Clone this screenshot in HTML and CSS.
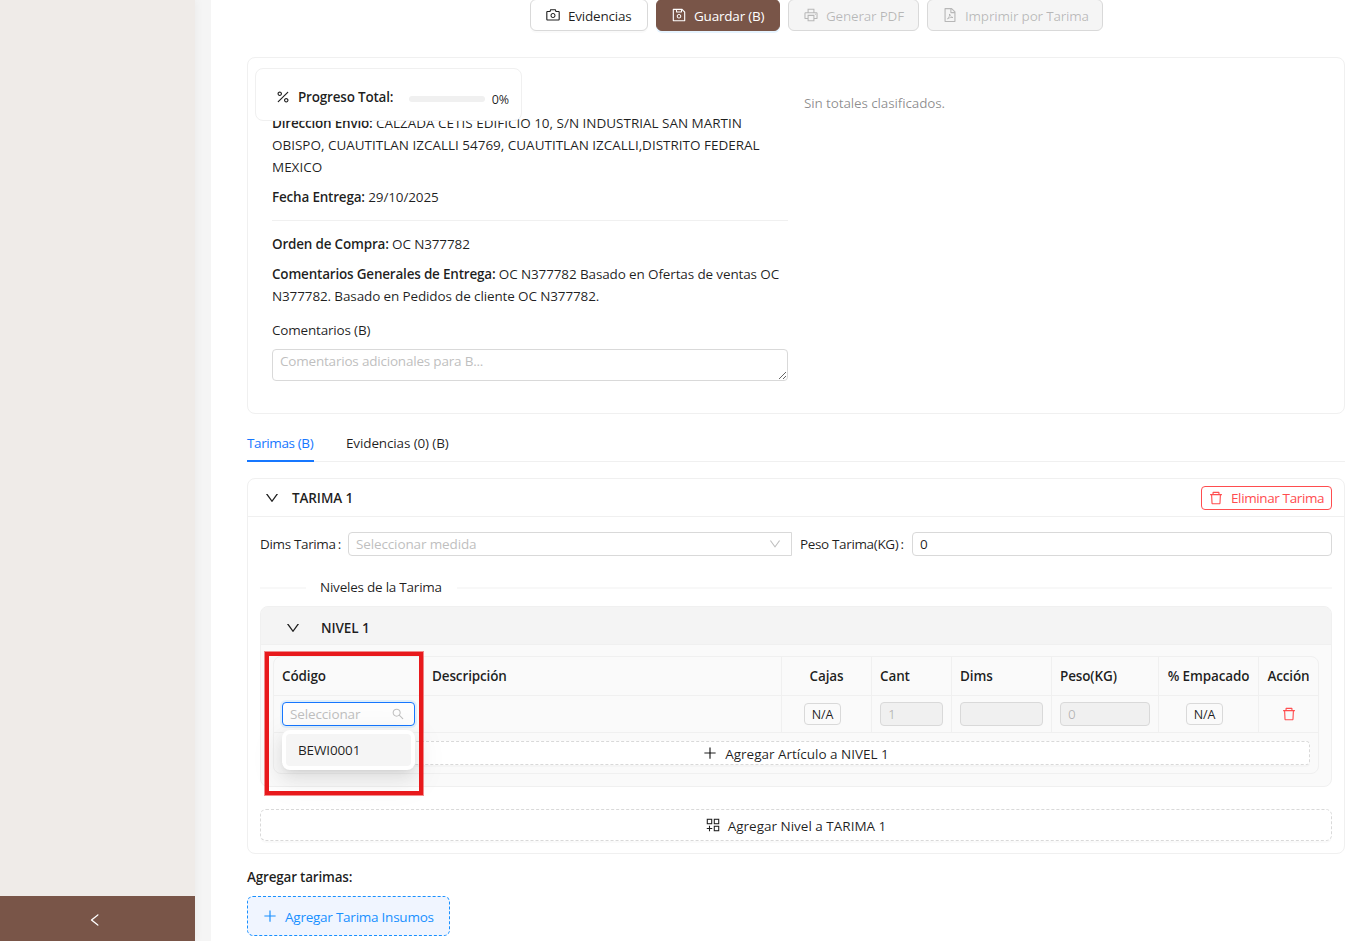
FILE: index.html
```html
<!DOCTYPE html>
<html lang="es">
<head>
    <meta charset="UTF-8">
    <meta name="viewport" content="width=device-width, initial-scale=1.0">
    <title>Tarimas</title>
    <link rel="stylesheet" href="styles.css">
</head>
<body>
    <svg class="sprite" xmlns="http://www.w3.org/2000/svg">
        <symbol id="plus" viewBox="64 64 896 896"><path d="M482 152h60q8 0 8 8v704q0 8-8 8h-60q-8 0-8-8V160q0-8 8-8z"/><path d="M160 474h704q8 0 8 8v60q0 8-8 8H160q-8 0-8-8v-60q0-8 8-8z"/></symbol>
        <symbol id="down" viewBox="64 64 896 896"><path d="M884 256h-75c-5.1 0-9.9 2.5-12.9 6.6L512 654.2 227.9 262.6c-3-4.1-7.8-6.6-12.9-6.6h-75c-6.5 0-10.3 7.4-6.5 12.7l352.6 486.1c12.8 17.6 39 17.6 51.7 0l352.6-486.1c3.9-5.3.1-12.7-6.4-12.7z"/></symbol>
        <symbol id="left" viewBox="64 64 896 896"><path d="M724 218.3V141c0-6.7-7.7-10.4-12.9-6.3L260.3 486.8a31.86 31.86 0 000 50.3l450.8 352.1c5.3 4.1 12.9.4 12.9-6.3v-77.3c0-4.9-2.3-9.6-6.1-12.6l-360-281 360-281.1c3.8-3 6.1-7.7 6.1-12.6z"/></symbol>
        <symbol id="delete" viewBox="64 64 896 896"><path d="M360 184h-8c4.4 0 8-3.6 8-8v8h304v-8c0 4.4 3.6 8 8 8h-8v72h72v-80c0-35.3-28.7-64-64-64H352c-35.3 0-64 28.7-64 64v80h72v-72zm504 72H160c-17.7 0-32 14.3-32 32v32c0 4.4 3.6 8 8 8h60.4l24.7 523c1.6 34.1 29.8 61 63.9 61h454c34.2 0 62.3-26.8 63.9-61l24.7-523H888c4.4 0 8-3.6 8-8v-32c0-17.7-14.3-32-32-32zM731.3 840H292.7l-24.2-512h487l-24.2 512z"/></symbol>
        <symbol id="search" viewBox="64 64 896 896"><path d="M909.6 854.5L649.9 594.8C690.2 542.7 712 479 712 412c0-80.2-31.3-155.4-87.9-212.1-56.6-56.7-132-87.9-212.1-87.9s-155.5 31.3-212.1 87.9C143.2 256.5 112 331.8 112 412c0 80.1 31.3 155.5 87.9 212.1C256.5 680.8 331.8 712 412 712c67 0 130.6-21.8 182.7-62l259.7 259.6a8.2 8.2 0 0011.6 0l43.6-43.5a8.2 8.2 0 000-11.6zM570.4 570.4C528 612.7 471.8 636 412 636s-116-23.3-158.4-65.6C211.3 528 188 471.8 188 412s23.3-116.1 65.6-158.4C296 211.3 352.2 188 412 188s116.1 23.2 158.4 65.6S636 352.2 636 412s-23.3 116.1-65.6 158.4z"/></symbol>
        <symbol id="camera" viewBox="64 64 896 896"><path d="M864 248H728l-32.4-90.8a32.07 32.07 0 00-30.2-21.2H358.6c-13.5 0-25.6 8.5-30.1 21.2L296 248H160c-44.2 0-80 35.8-80 80v456c0 44.2 35.8 80 80 80h704c44.2 0 80-35.8 80-80V328c0-44.2-35.8-80-80-80zm8 536c0 4.4-3.6 8-8 8H160c-4.4 0-8-3.6-8-8V328c0-4.4 3.6-8 8-8h186.7l17.1-47.8 22.9-64.2h250.5l22.9 64.2 17.1 47.8H864c4.4 0 8 3.6 8 8v456zM512 384c-88.4 0-160 71.6-160 160s71.6 160 160 160 160-71.6 160-160-71.6-160-160-160zm0 256c-53 0-96-43-96-96s43-96 96-96 96 43 96 96-43 96-96 96z"/></symbol>
        <symbol id="save" viewBox="64 64 896 896"><path d="M893.3 293.3L730.7 130.7c-7.5-7.5-16.7-13-26.7-16V112H144c-17.7 0-32 14.3-32 32v736c0 17.7 14.3 32 32 32h736c17.7 0 32-14.3 32-32V338.5c0-17-6.7-33.2-18.7-45.2zM384 184h256v104H384V184zm456 656H184V184h136v136c0 17.7 14.3 32 32 32h320c17.7 0 32-14.3 32-32V205.8l136 136V840zM512 442c-79.5 0-144 64.5-144 144s64.5 144 144 144 144-64.5 144-144-64.5-144-144-144zm0 224c-44.2 0-80-35.8-80-80s35.8-80 80-80 80 35.8 80 80-35.8 80-80 80z"/></symbol>
        <symbol id="printer" viewBox="64 64 896 896"><path d="M820 436h-40c-4.4 0-8 3.6-8 8v40c0 4.4 3.6 8 8 8h40c4.4 0 8-3.6 8-8v-40c0-4.4-3.6-8-8-8zm32-104H732V120c0-4.4-3.6-8-8-8H300c-4.4 0-8 3.6-8 8v212H172c-44.2 0-80 35.8-80 80v328c0 17.7 14.3 32 32 32h168v132c0 4.4 3.6 8 8 8h424c4.4 0 8-3.6 8-8V772h168c17.7 0 32-14.3 32-32V412c0-44.2-35.8-80-80-80zM360 180h304v152H360V180zm304 664H360V568h304v276zm200-140H732V500H292v204H160V412c0-6.6 5.4-12 12-12h680c6.6 0 12 5.4 12 12v292z"/></symbol>
        <symbol id="pdf" viewBox="64 64 896 896"><path d="M854.6 288.6L639.4 73.4c-6-6-14.1-9.4-22.6-9.4H192c-17.7 0-32 14.3-32 32v832c0 17.7 14.3 32 32 32h640c17.7 0 32-14.3 32-32V311.3c0-8.5-3.4-16.7-9.4-22.7zM790.2 326H602V137.8L790.2 326zm1.8 562H232V136h302v216a42 42 0 0042 42h216v494z"/><path d="M490 445c22 105 70 195 205 225-130-15-250 20-350 100 85-75 150-190 145-325z" fill="none" stroke="currentColor" stroke-width="48" stroke-linejoin="round"/></symbol>
        <symbol id="percentage" viewBox="64 64 896 896"><path d="M855.7 210.8l-42.4-42.4a8.03 8.03 0 00-11.3 0L168.3 801.9a8.03 8.03 0 000 11.3l42.4 42.4c3.1 3.1 8.2 3.1 11.3 0L855.6 222c3.2-3 3.2-8.1.1-11.2zM304 448c79.4 0 144-64.6 144-144s-64.6-144-144-144-144 64.6-144 144 64.6 144 144 144zm0-216c39.7 0 72 32.3 72 72s-32.3 72-72 72-72-32.3-72-72 32.3-72 72-72zm416 344c-79.4 0-144 64.6-144 144s64.6 144 144 144 144-64.6 144-144-64.6-144-144-144zm0 216c-39.7 0-72-32.3-72-72s32.3-72 72-72 72 32.3 72 72-32.3 72-72 72z"/></symbol>
        <symbol id="appstore-add" viewBox="64 64 896 896"><g fill="none" stroke="currentColor" stroke-width="68"><rect x="146" y="146" width="284" height="284"/><rect x="594" y="146" width="284" height="284"/><rect x="594" y="594" width="284" height="284"/><path d="M288 556v356M112 734h352"/></g></symbol>
    </svg>

    <div class="sidebar">
        <div class="sidebar-trigger"><svg class="icon"><use href="#left"/></svg></div>
    </div>

    <div class="main">
        <div class="toolbar">
            <button class="btn btn-evidencias"><svg class="icon"><use href="#camera"/></svg><span>Evidencias</span></button>
            <button class="btn btn-guardar"><svg class="icon"><use href="#save"/></svg><span>Guardar (B)</span></button>
            <button class="btn btn-pdf" disabled><svg class="icon"><use href="#printer"/></svg><span>Generar PDF</span></button>
            <button class="btn btn-imprimir" disabled><svg class="icon"><use href="#pdf"/></svg><span>Imprimir por Tarima</span></button>
        </div>

        <div class="card info">
            <div class="progress-card">
                <svg class="icon"><use href="#percentage"/></svg>
                <strong>Progreso Total:</strong>
                <div class="progress-bar"></div>
                <span class="progress-text">0%</span>
            </div>
            <div class="info-left">
                <p><strong>Dirección Envío:</strong> <span class="address">CALZADA CETIS EDIFICIO 10, S/N INDUSTRIAL SAN MARTIN<br>OBISPO, CUAUTITLAN IZCALLI 54769, CUAUTITLAN IZCALLI,DISTRITO FEDERAL<br>MEXICO</span></p>
                <p><strong>Fecha Entrega:</strong> 29/10/2025</p>
                <hr>
                <p><strong>Orden de Compra:</strong> OC N377782</p>
                <p><strong>Comentarios Generales de Entrega:</strong> OC N377782 Basado en Ofertas de ventas OC<br>N377782. Basado en Pedidos de cliente OC N377782.</p>
                <label for="comentarios">Comentarios (B)</label>
                <textarea id="comentarios" rows="1" placeholder="Comentarios adicionales para B..."></textarea>
            </div>
            <div class="info-right">Sin totales clasificados.</div>
        </div>

        <div class="tabs">
            <div class="tab active">Tarimas (B)</div>
            <div class="tab">Evidencias (0) (B)</div>
        </div>

        <div class="card tarima">
            <div class="tarima-header">
                <svg class="icon"><use href="#down"/></svg>
                <strong>TARIMA 1</strong>
                <button class="btn-eliminar"><svg class="icon"><use href="#delete"/></svg><span>Eliminar Tarima</span></button>
            </div>
            <div class="tarima-body">
                <div class="form-row">
                    <label class="dims-label">Dims Tarima<i>:</i></label>
                    <div class="select dims-select"><span>Seleccionar medida</span><svg class="icon"><use href="#down"/></svg></div>
                    <label class="peso-label">Peso Tarima(KG)<i>:</i></label>
                    <input class="peso-input" type="text" value="0">
                </div>

                <div class="divider"><span>Niveles de la Tarima</span></div>

                <div class="nivel">
                    <div class="nivel-header">
                        <svg class="icon"><use href="#down"/></svg>
                        <strong>NIVEL 1</strong>
                    </div>
                    <div class="nivel-body">
                        <div class="table">
                            <div class="row head">
                                <div>Código</div>
                                <div>Descripción</div>
                                <div class="center">Cajas</div>
                                <div>Cant</div>
                                <div>Dims</div>
                                <div>Peso(KG)</div>
                                <div class="center">% Empacado</div>
                                <div class="center">Acción</div>
                            </div>
                            <div class="row">
                                <div class="code-cell">
                                    <div class="select code-select"><span>Seleccionar</span><svg class="icon"><use href="#search"/></svg></div>
                                    <div class="dropdown"><div class="option">BEWI0001</div></div>
                                    <div class="highlight"></div>
                                </div>
                                <div></div>
                                <div class="center"><span class="tag">N/A</span></div>
                                <div><input type="text" value="1" disabled></div>
                                <div><input type="text" value="" disabled></div>
                                <div><input type="text" value="0" disabled></div>
                                <div class="center"><span class="tag">N/A</span></div>
                                <div class="center"><svg class="icon danger"><use href="#delete"/></svg></div>
                            </div>
                            <div class="table-footer">
                                <button class="btn-dashed small"><svg class="icon"><use href="#plus"/></svg><span>Agregar Artículo a NIVEL 1</span></button>
                            </div>
                        </div>
                    </div>
                </div>

                <button class="btn-dashed"><svg class="icon"><use href="#appstore-add"/></svg><span>Agregar Nivel a TARIMA 1</span></button>
            </div>
        </div>

        <strong class="agregar-title">Agregar tarimas:</strong>
        <button class="btn-insumos"><svg class="icon"><use href="#plus"/></svg><span>Agregar Tarima Insumos</span></button>
    </div>
</body>
</html>
```
FILE: styles.css
```css
* {
    box-sizing: border-box;
}

body {
    margin: 0;
    display: flex;
    height: 941px;
    overflow: hidden;
    background: #f5f5f5;
    font-family: "Open Sans", "Noto Sans", sans-serif;
    font-size: 13.5px;
    letter-spacing: -0.13px;
    line-height: 22px;
    color: rgba(0, 0, 0, 0.88);
}

button, input, textarea {
    font: inherit;
    letter-spacing: inherit;
    color: inherit;
    margin: 0;
}

strong {
    font-weight: 600;
    letter-spacing: -0.2px;
}

.sprite {
    display: none;
}

.icon {
    width: 14px;
    height: 14px;
    flex: none;
    fill: currentColor;
}

/* sidebar */
.sidebar {
    width: 195px;
    flex: none;
    display: flex;
    flex-direction: column;
    justify-content: flex-end;
    background: #efebe8;
    box-shadow: 2px 0 8px rgba(0, 0, 0, 0.04);
}

.sidebar-trigger {
    height: 45px;
    display: flex;
    align-items: center;
    justify-content: center;
    padding: 2px 5px 0 0;
    background: #795548;
    color: white;
}

.main {
    flex: 1;
    margin-left: 16px;
    padding: 0 17px 0 36px;
    background: white;
}

/* top buttons */
.toolbar {
    display: flex;
    gap: 8px;
    height: 31px;
    margin-top: -1px;
    padding-left: 283px;
}

.btn {
    display: flex;
    align-items: center;
    gap: 8px;
    height: 32px;
    padding: 2px 0 0 15px;
    background: white;
    border: 1px solid #d9d9d9;
    border-radius: 6px;
    box-shadow: 0 2px 0 rgba(0, 0, 0, 0.02);
    letter-spacing: -0.2px;
    white-space: nowrap;
}

.btn .icon {
    margin-top: -2px;
}

.btn:disabled {
    background: #f5f5f5;
    color: rgba(0, 0, 0, 0.25);
    box-shadow: none;
}

.btn-evidencias {
    width: 118px;
}

.btn-guardar {
    width: 124px;
    background: #795548;
    border-color: #795548;
    color: white;
    box-shadow: 0 2px 0 rgba(5, 145, 255, 0.1);
}

.btn-pdf {
    width: 131px;
}

.btn-imprimir {
    width: 176px;
}

/* info card */
.card {
    border: 1px solid #f0f0f0;
    border-radius: 8px;
    background: white;
}

.info {
    position: relative;
    display: flex;
    gap: 16px;
    height: 357px;
    margin-top: 27px;
    padding: 54px 24px 0;
}

.progress-card {
    position: absolute;
    left: 7px;
    top: 10px;
    width: 267px;
    height: 53px;
    display: flex;
    align-items: center;
    padding: 5px 12px 0 20px;
    background: white;
    border: 1px solid #f0f0f0;
    border-radius: 8px;
    white-space: nowrap;
}

.progress-card strong {
    width: 111px;
    margin-left: 8px;
}

.progress-bar {
    width: 76px;
    height: 6px;
    margin-top: 4px;
    border-radius: 3px;
    background: #f0f0f0;
}

.progress-text {
    margin: 6px 0 0 7px;
    font-size: 12.5px;
}

.info-left {
    width: 516px;
    flex: none;
    white-space: nowrap;
}

.info-left p {
    margin: 0 0 8px;
}

.address {
    letter-spacing: -0.01px;
}

.info-left hr {
    margin: 12px 0;
    border: 0;
    border-top: 1px solid #f0f0f0;
}

.info-left label {
    display: block;
    margin-top: 12px;
    letter-spacing: -0.18px;
}

.info-left textarea {
    display: block;
    width: 100%;
    height: 32px;
    margin-top: 8px;
    padding: 0 7px;
    border: 1px solid #d9d9d9;
    border-radius: 4px;
    letter-spacing: -0.2px;
    resize: vertical;
    overflow: hidden;
}

textarea::placeholder {
    color: #bfbfbf;
}

.info-right {
    margin-top: -20px;
    color: rgba(0, 0, 0, 0.45);
}

/* tabs */
.tabs {
    display: flex;
    gap: 32px;
    height: 48px;
    padding-top: 18px;
    border-bottom: 1px solid #f0f0f0;
}

.tab {
    height: 30px;
    white-space: nowrap;
}

.tab.active {
    width: 67px;
    color: #1677ff;
    border-bottom: 2px solid #1677ff;
    letter-spacing: -0.38px;
}

/* tarima */
.tarima {
    height: 376px;
    margin-top: 16px;
}

.tarima-header {
    display: flex;
    align-items: center;
    height: 38px;
    padding: 0 12px 0 17px;
    border-bottom: 1px solid #f0f0f0;
}

.tarima-header strong {
    margin-left: 13px;
    letter-spacing: -0.1px;
}

.btn-eliminar {
    display: flex;
    align-items: center;
    gap: 8px;
    width: 131px;
    height: 24px;
    margin-left: auto;
    padding: 0 0 0 7px;
    background: white;
    border: 1px solid #ff4d4f;
    border-radius: 4px;
    color: #ff4d4f;
    letter-spacing: -0.38px;
    white-space: nowrap;
}

.tarima-body {
    padding: 15px 12px 0;
}

.form-row {
    display: flex;
    align-items: center;
    height: 24px;
    white-space: nowrap;
}

.form-row label {
    letter-spacing: -0.35px;
}

.form-row i {
    margin-left: 2px;
    font-style: normal;
}

.dims-label {
    width: 88px;
}

.peso-label {
    width: 112px;
    margin-left: 8px;
}

.select {
    display: flex;
    align-items: center;
    justify-content: space-between;
    height: 24px;
    padding: 0 10px 0 7px;
    background: white;
    border: 1px solid #d9d9d9;
    border-radius: 4px;
    color: #bfbfbf;
}

.select .icon {
    width: 12px;
    height: 12px;
}

.dims-select {
    width: 444px;
    border-radius: 4px 0 0 4px;
}

input {
    height: 24px;
    padding: 0 7px;
    border: 1px solid #d9d9d9;
    border-radius: 4px;
    background: white;
}

.peso-input {
    flex: 1;
}

.divider {
    display: flex;
    align-items: center;
    height: 22px;
    margin-top: 20px;
    letter-spacing: -0.23px;
    white-space: nowrap;
}

.divider::before,
.divider::after {
    content: "";
    height: 2px;
    margin-top: 2px;
    background: #f8f8f8;
}

.divider::before {
    width: 46px;
}

.divider::after {
    flex: 1;
}

.divider span {
    width: 151px;
    padding-left: 14px;
}

/* nivel */
.nivel {
    height: 181px;
    margin: 8px 0 22px;
    background: #fafafa;
    border: 1px solid #f0f0f0;
    border-radius: 8px;
}

.nivel-header {
    display: flex;
    align-items: center;
    height: 38px;
    padding: 4px 0 0 25px;
    background: #f4f4f4;
    border-bottom: 1px solid #f0f0f0;
    border-radius: 7px 7px 0 0;
}

.nivel-header strong {
    margin-left: 21px;
    letter-spacing: -0.1px;
}

.nivel-body {
    padding: 11px 12px 0;
}

.table {
    height: 118px;
    border: 1px solid #f0f0f0;
    border-radius: 8px;
}

.row {
    display: grid;
    grid-template-columns: 150px 358px 90px 80px 100px 107px 100px 1fr;
    height: 37px;
    border-bottom: 1px solid #f0f0f0;
    white-space: nowrap;
}

.row > div {
    display: flex;
    align-items: center;
    padding: 0 8px;
    border-right: 1px solid #f0f0f0;
}

.row > div:last-child {
    border-right: none;
}

.head {
    height: 39px;
    font-weight: 600;
}

.row > .center {
    justify-content: center;
    padding: 0;
}

.row input {
    width: 100%;
    min-width: 0;
    background: #f0f0f0;
    color: rgba(0, 0, 0, 0.25);
}

.tag {
    height: 22px;
    margin-right: 8px;
    padding: 0 7px;
    border: 1px solid #d9d9d9;
    border-radius: 4px;
    font-size: 12.5px;
    line-height: 21px;
}

.danger {
    color: #ff4d4f;
}

.code-cell {
    position: relative;
}

.code-select {
    width: 133px;
    flex: none;
    background: #fdfdfd;
    border-color: #1677ff;
    box-shadow: 0 0 0 2px rgba(5, 145, 255, 0.1);
}

.dropdown {
    position: absolute;
    z-index: 2;
    left: 8px;
    top: 34px;
    width: 133px;
    height: 40px;
    padding: 4px;
    background: white;
    border-radius: 8px;
    box-shadow: 0 6px 16px 0 rgba(0, 0, 0, 0.08), 0 3px 6px -4px rgba(0, 0, 0, 0.12), 0 9px 28px 8px rgba(0, 0, 0, 0.05);
}

.option {
    height: 32px;
    padding-left: 12px;
    background: #f5f5f5;
    border-radius: 4px;
    line-height: 32px;
}

/* red marker around the code column */
.highlight {
    position: absolute;
    z-index: 3;
    left: -9px;
    top: -44px;
    width: 158px;
    height: 143px;
    border: 4px solid #e8191c;
    box-shadow: 0 0 0 1px rgba(232, 25, 28, 0.5);
}

.table-footer {
    padding: 8px 8px 0;
}

.btn-dashed {
    display: flex;
    align-items: center;
    justify-content: center;
    gap: 8px;
    width: 100%;
    height: 32px;
    padding: 2px 0 0;
    background: white;
    border: 1px dashed #d9d9d9;
    border-radius: 6px;
    box-shadow: 0 2px 0 rgba(0, 0, 0, 0.02);
    letter-spacing: 0;
}

.btn-dashed.small {
    height: 24px;
    border-radius: 4px;
}

.btn-dashed .icon {
    margin-top: -2px;
}

/* agregar tarimas */
.agregar-title {
    display: block;
    margin-top: 12px;
}

.btn-insumos {
    display: flex;
    align-items: center;
    gap: 8px;
    width: 203px;
    height: 40px;
    margin-top: 8px;
    padding: 2px 0 0 15px;
    background: #f0f5ff;
    border: 1px dashed #1890ff;
    border-radius: 6px;
    color: #1890ff;
    letter-spacing: -0.24px;
    white-space: nowrap;
}

.btn-insumos .icon {
    margin-top: -3px;
}
```
